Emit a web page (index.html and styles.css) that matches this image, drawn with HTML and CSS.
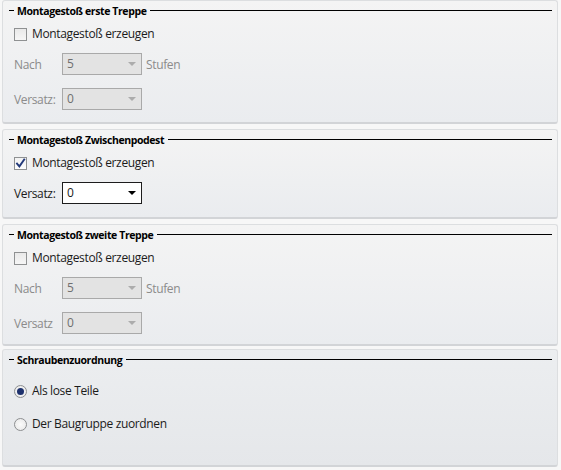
FILE: index.html
```html
<!DOCTYPE html>
<html lang="de">
<head>
<meta charset="utf-8">
<title>Montagestoß</title>
<link rel="stylesheet" href="styles.css">
</head>
<body>
<div class="page">
  <section class="panel panel-a">
    <div class="legend"><span class="dash"></span><span class="title">Montagestoß erste Treppe</span><span class="rule"></span></div>
    <div class="check"><span class="box"></span><span class="text">Montagestoß erzeugen</span></div>
    <div class="row row-first disabled">
      <span class="lbl">Nach</span>
      <div class="combo"><span class="val">5</span><span class="arrow"></span></div>
      <span class="unit">Stufen</span>
    </div>
    <div class="row row-second disabled">
      <span class="lbl">Versatz:</span>
      <div class="combo"><span class="val">0</span><span class="arrow"></span></div>
    </div>
  </section>

  <section class="panel panel-b">
    <div class="legend"><span class="dash"></span><span class="title">Montagestoß Zwischenpodest</span><span class="rule"></span></div>
    <div class="check checked"><span class="box"><svg viewBox="0 0 13 13" width="13" height="13"><path d="M3 6.6 L5.4 9.4 L10.2 2.6" fill="none" stroke="#23397a" stroke-width="1.9" stroke-linecap="square"/></svg></span><span class="text">Montagestoß erzeugen</span></div>
    <div class="row row-first">
      <span class="lbl">Versatz:</span>
      <div class="combo"><span class="val">0</span><span class="arrow"></span></div>
    </div>
  </section>

  <section class="panel panel-c">
    <div class="legend"><span class="dash"></span><span class="title">Montagestoß zweite Treppe</span><span class="rule"></span></div>
    <div class="check"><span class="box"></span><span class="text">Montagestoß erzeugen</span></div>
    <div class="row row-first disabled">
      <span class="lbl">Nach</span>
      <div class="combo"><span class="val">5</span><span class="arrow"></span></div>
      <span class="unit">Stufen</span>
    </div>
    <div class="row row-second disabled">
      <span class="lbl">Versatz</span>
      <div class="combo"><span class="val">0</span><span class="arrow"></span></div>
    </div>
  </section>

  <section class="panel panel-d">
    <div class="legend"><span class="dash"></span><span class="title">Schraubenzuordnung</span><span class="rule"></span></div>
    <div class="radio radio-first selected"><span class="circle"></span><span class="text">Als lose Teile</span></div>
    <div class="radio radio-second"><span class="circle"></span><span class="text">Der Baugruppe zuordnen</span></div>
  </section>
</div>
</body>
</html>
```

FILE: styles.css
```css
html, body {
  margin: 0;
  padding: 0;
  background: #f7f7f7;
}
body {
  font-family: "Open Sans", "Noto Sans", "Liberation Sans", sans-serif;
  font-size: 12px;
  letter-spacing: -0.35px;
  color: #1b1b1b;
}
.page {
  width: 556px;
  padding: 0 3px 0 2px;
  display: flex;
  flex-direction: column;
}
.panel {
  box-sizing: border-box;
  border: 1px solid #dcdee0;
  border-bottom: 2px solid #d2d4d7;
  border-radius: 3px;
  background: linear-gradient(#f4f4f4, #eaecef);
  padding: 0 5px 0 11px;
  display: flex;
  flex-direction: column;
}
.panel-a { height: 124px; }
.panel-b { height: 90px; margin-top: 5px; }
.panel-c { height: 122px; margin-top: 5px; }
.panel-d { height: 118px; margin-top: 3px; background: linear-gradient(#eceef0, #e5e7ea); }

.legend {
  height: 19px;
  display: flex;
  align-items: center;
  margin-left: -5px;
}
.dash {
  width: 5px;
  height: 1px;
  background: #000;
  margin-right: 3px;
}
.title {
  font-family: "Open Sans", "Noto Sans", sans-serif;
  font-weight: 700;
  font-size: 10.5px;
  color: #000;
  letter-spacing: -0.4px;
  line-height: 14px;
}
.rule {
  flex: 1;
  height: 1px;
  background: #000;
  margin-left: 4px;
  margin-right: 0;
}

.check, .radio {
  display: flex;
  align-items: center;
  height: 20px;
}
.check { margin-top: 4px; }
.box {
  box-sizing: border-box;
  width: 13px;
  height: 13px;
  border: 1px solid #8f9192;
  background: linear-gradient(#e9e9e9, #f6f6f6);
  margin-right: 5px;
  display: flex;
}
.box svg { margin: -1px; }
.checked .box { background: linear-gradient(#f2f2f2, #fdfdfd); }
.text { line-height: 16px; }

.row {
  display: flex;
  align-items: center;
  height: 22px;
}
.row-first { margin-top: 9px; }
.row-second { margin-top: 13px; }
.lbl {
  width: 48px;
}
.unit { margin-left: 4px; }
.combo {
  box-sizing: border-box;
  width: 80px;
  height: 22px;
  border: 1px solid #1d1d1d;
  background: #fff;
  display: flex;
  align-items: center;
  padding-left: 4px;
  padding-right: 5px;
}
.val { flex: 1; line-height: 16px; }
.arrow {
  width: 0;
  height: 0;
  border-left: 4px solid transparent;
  border-right: 4px solid transparent;
  border-top: 4px solid #000;
}
.disabled { color: #8b8b8b; }
.disabled .combo {
  background: #e3e3e3;
  border-color: #a9a9a9;
  color: #6f6f6f;
}
.disabled .arrow { border-top-color: #acacac; }

.radio-first { margin-top: 12px; }
.radio-second { margin-top: 13px; }
.circle {
  box-sizing: border-box;
  width: 13px;
  height: 13px;
  border-radius: 50%;
  border: 1px solid #8d8f91;
  background: radial-gradient(circle, #fbfbfb, #e6e6e6);
  margin-right: 5px;
  display: flex;
  align-items: center;
  justify-content: center;
}
.selected .circle::after {
  content: "";
  width: 7px;
  height: 7px;
  border-radius: 50%;
  background: #1d316d;
}
```
